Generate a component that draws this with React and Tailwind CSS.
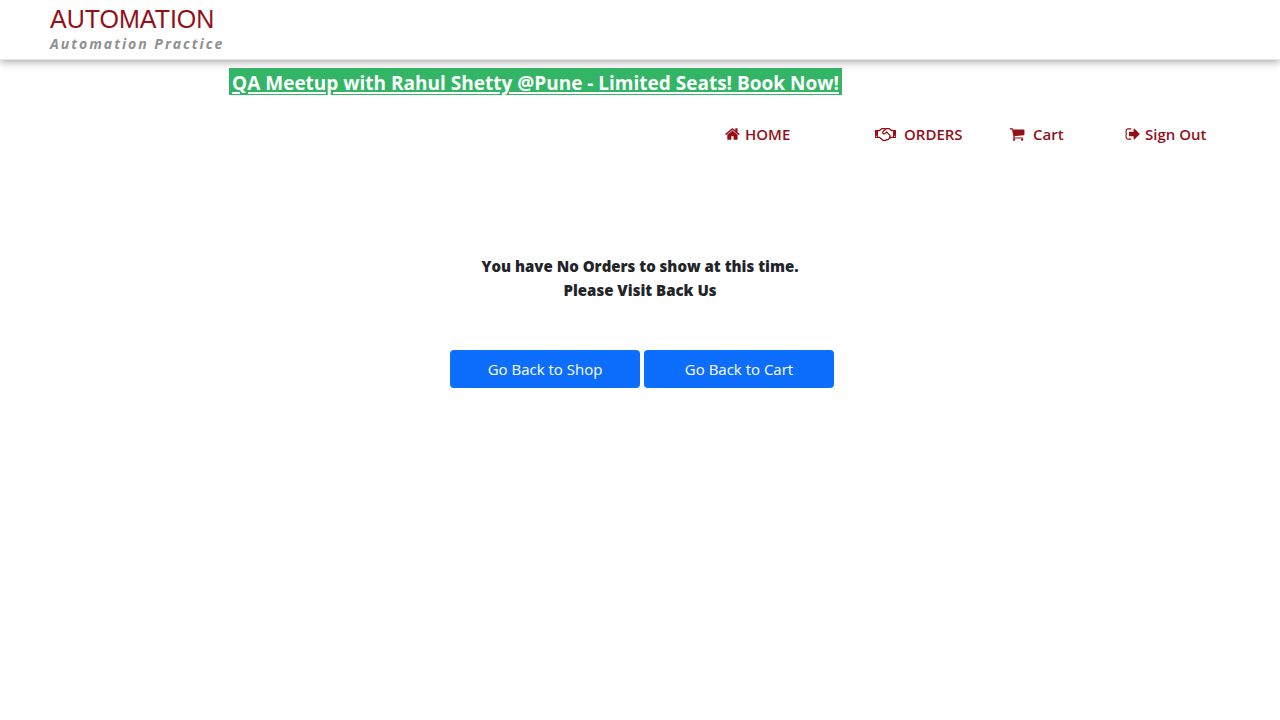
const homePath =
  "M1408 992v480q0 26-19 45t-45 19h-384v-384h-256v384h-384q-26 0-45-19t-19-45v-480q0-1 .5-3t.5-3l575-474 575 474q1 2 1 6zm223-69l-62 74q-8 9-21 11h-3q-13 0-21-7l-692-577-692 577q-12 8-24 7-13-2-21-11l-62-74q-8-10-7-23.5t11-21.5l719-599q32-26 76-26t76 26l244 204v-195q0-14 9-23t23-9h192q14 0 23 9t9 23v408l219 182q10 8 11 21.5t-7 23.5z";
const cartPath =
  "M704 1536q0 52-38 90t-90 38-90-38-38-90 38-90 90-38 90 38 38 90zm896 0q0 52-38 90t-90 38-90-38-38-90 38-90 90-38 90 38 38 90zm128-1088v512q0 24-16.5 42.5t-40.5 21.5l-1044 122q13 60 13 70 0 16-24 64h920q26 0 45 19t19 45-19 45-45 19h-1024q-26 0-45-19t-19-45q0-11 8-31.5t16-36 21.5-40 15.5-29.5l-177-823h-204q-26 0-45-19t-19-45 19-45 45-19h256q16 0 28.5 6.5t19.5 15.5 13 24.5 8 26 5.5 29.5 4.5 26h1201q26 0 45 19t19 45z";
const signOutPath =
  "M704 1440q0 4 1 20t.5 26.5-3 23.5-10 19.5-20.5 6.5h-320q-119 0-203.5-84.5t-84.5-203.5v-704q0-119 84.5-203.5t203.5-84.5h320q13 0 22.5 9.5t9.5 22.5q0 4 1 20t.5 26.5-3 23.5-10 19.5-20.5 6.5h-320q-66 0-113 47t-47 113v704q0 66 47 113t113 47h312l11.5 1 11.5 3 8 5.5 7 9 2 13.5zm928-544q0 26-19 45l-544 544q-19 19-45 19t-45-19-19-45v-288h-448q-26 0-45-19t-19-45v-384q0-26 19-45t45-19h448v-288q0-26 19-45t45-19 45 19l544 544q19 19 19 45z";

function Glyph({ d }) {
  return (
    <svg viewBox="0 0 1792 1792" className="size-4 shrink-0" fill="currentColor" aria-hidden="true">
      <path d={d} />
    </svg>
  );
}

function Handshake() {
  return (
    <svg
      viewBox="0 0 21 16"
      className="h-4 w-[21px] shrink-0"
      fill="none"
      stroke="currentColor"
      strokeWidth="1.3"
      strokeLinejoin="round"
      strokeLinecap="round"
      aria-hidden="true"
    >
      <path d="M0 4h3v8H0zM18 4h3v8h-3z" fill="currentColor" stroke="none" />
      <path d="M1.200 10.300h.3M19.500 10.300h.3" stroke="white" strokeWidth="1" />
      <path d="M3 4.500h1.600L7 2.600h2.600l1 .6 1-.6h2.600l2.200 1.900H18M3 11.300h1.400l3.400 2.900q1 .6 2 .1 1.300.3 2-.6 1.500.2 2-1 1.400 0 1.700-1.400H18" />
      <path d="M10.600 3.200L8 5.600q-.8 1 0 1.900 1 .8 2 0l1.600-1.500 3.300 3.400q.8.900-.4 1.900" />
    </svg>
  );
}

function NavButton({ icon, label, gap = "gap-1" }) {
  return (
    <button type="button" className={`flex items-center whitespace-nowrap ${gap}`}>
      {icon}
      <span>{label}</span>
    </button>
  );
}

function ActionButton({ children }) {
  return (
    <button type="button" className="h-[38px] w-[190px] rounded bg-[#0d6efd] text-[15px] text-white">
      {children}
    </button>
  );
}

export default function App() {
  return (
    <div className="min-h-screen bg-white font-['Open_Sans',sans-serif] text-[#212529]">
      <header className="flex h-[60px] flex-col border-b border-[#e7e7e7] pt-1 pl-[50px] shadow-[0_2px_8px_rgba(0,0,0,0.35)]">
        <a href="#home" className="flex flex-col self-start">
          <span className="font-['Liberation_Sans',sans-serif] text-[25px] leading-[30px] text-[#931019]">
            AUTOMATION
          </span>
          <span className="text-[14px] leading-5 font-bold tracking-[2px] text-[#909090] italic">
            Automation Practice
          </span>
        </a>
      </header>

      <div className="pt-2 pr-[209px] text-center text-[19px] leading-6 font-bold">
        <a
          href="#meetup"
          className="inline-block bg-[#32b665] px-[3px] pt-[3px] align-top text-white underline decoration-2 underline-offset-2"
        >
          QA Meetup with Rahul Shetty @Pune - Limited Seats! Book Now!
        </a>
      </div>

      <nav className="mt-[27px] flex justify-end pr-[71px] text-[15px] leading-6 font-semibold text-[#931019]">
        <ul className="grid grid-cols-[150px_134px_116px_84px]">
          <li><NavButton icon={<Glyph d={homePath} />} label="HOME" /></li>
          <li><NavButton icon={<Handshake />} label="ORDERS" gap="gap-2" /></li>
          <li><NavButton icon={<Glyph d={cartPath} />} label="Cart" gap="gap-2" /></li>
          <li><NavButton icon={<Glyph d={signOutPath} />} label="Sign Out" /></li>
        </ul>
      </nav>

      <main className="flex flex-col items-center pt-[108px]">
        <p className="text-center text-[15px] leading-6 font-extrabold">
          You have No Orders to show at this time.
          <br />
          Please Visit Back Us
        </p>
        <div className="mt-12 flex gap-1 pl-1">
          <ActionButton>Go Back to Shop</ActionButton>
          <ActionButton>Go Back to Cart</ActionButton>
        </div>
      </main>
    </div>
  );
}
